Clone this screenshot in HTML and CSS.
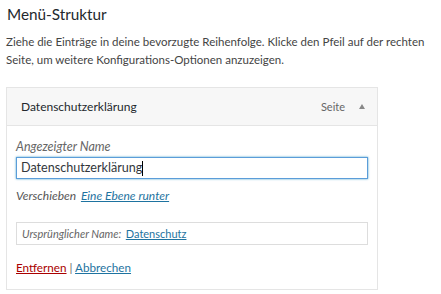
FILE: index.html
```html
<!DOCTYPE html>
<html lang="de">
<head>
<meta charset="utf-8">
<link rel="stylesheet" href="styles.css">
</head>
<body>
<h2 class="title">Menü-Struktur</h2>
<p class="intro">Ziehe die Einträge in deine bevorzugte Reihenfolge. Klicke den Pfeil auf der rechten Seite, um weitere Konfigurations-Optionen anzuzeigen.</p>
<div class="item">
  <div class="item-bar">
    <span class="item-title">Datenschutzerklärung</span>
    <span class="item-controls"><span class="item-type">Seite</span><span class="arrow"></span></span>
  </div>
  <div class="settings">
    <label class="field-label">Angezeigter Name</label>
    <div class="input">Datenschutzerklärung<span class="caret"></span></div>
    <div class="move">Verschieben <a class="link">Eine Ebene runter</a></div>
    <div class="original">Ursprünglicher Name: <a class="link">Datenschutz</a></div>
    <div class="actions"><a class="remove">Entfernen</a> <span class="sep">|</span> <a class="link-plain">Abbrechen</a></div>
  </div>
</div>
</body>
</html>
```
FILE: styles.css
```css
html, body {
  margin: 0;
  padding: 0;
  background: #fff;
}
body {
  font-family: Lato, "Noto Sans", sans-serif;
  color: #444;
  font-size: 12px;
  width: 441px;
  height: 294px;
  overflow: hidden;
}
.title {
  margin: 0;
  padding: 4px 0 0 7px;
  font-size: 15.3px;
  font-weight: 400;
  color: #23282d;
  line-height: 20px;
}
.intro {
  margin: 9px 0 0 6px;
  line-height: 18px;
  font-size: 11.5px;
  color: #444;
}
.item {
  margin: 18px 0 0 6px;
  width: 370px;
  border: 1px solid #e5e5e5;
  background: #fff;
}
.item-bar {
  display: flex;
  align-items: center;
  justify-content: space-between;
  height: 37px;
  background: #f7f7f7;
  border-bottom: 1px solid #e5e5e5;
  padding: 0 12px 0 14px;
}
.item-title {
  font-size: 12px;
  color: #23282d;
}
.item-controls {
  display: flex;
  align-items: center;
  gap: 14px;
}
.item-type {
  color: #666;
  font-size: 11px;
}
.arrow {
  width: 0;
  height: 0;
  border-left: 3.5px solid transparent;
  border-right: 3.5px solid transparent;
  border-bottom: 5px solid #888;
}
.settings {
  padding: 13px 9px 14px 9px;
}
.field-label {
  display: block;
  font-style: italic;
  color: #666;
  font-size: 12.5px;
  line-height: 16px;
}
.input {
  margin-top: 2px;
  height: 20px;
  border: 1px solid #5b9dd9;
  box-shadow: 0 0 2px rgba(30,140,190,.8);
  padding: 0 4px;
  font-size: 12.6px;
  line-height: 20px;
  color: #32373c;
  display: flex;
  align-items: center;
}
.caret {
  display: inline-block;
  width: 1px;
  height: 15px;
  background: #000;
}
.move {
  margin-top: 9px;
  font-style: italic;
  color: #555;
  line-height: 16px;
  font-size: 12px;
}
.move .link {
  margin-left: 2px;
}
.link, .link-plain {
  color: #1e73a0;
  text-decoration: underline;
}
.original {
  margin-top: 18px;
  border: 1px solid #ddd;
  height: 21px;
  line-height: 21px;
  padding: 0 5px;
  font-style: italic;
  color: #666;
  font-size: 11px;
}
.original .link {
  font-style: normal;
  margin-left: 2px;
}
.actions {
  margin-top: 14px;
  line-height: 16px;
  font-size: 11.7px;
}
.remove {
  color: #a00;
  text-decoration: underline;
}
.sep {
  color: #666;
}
```
